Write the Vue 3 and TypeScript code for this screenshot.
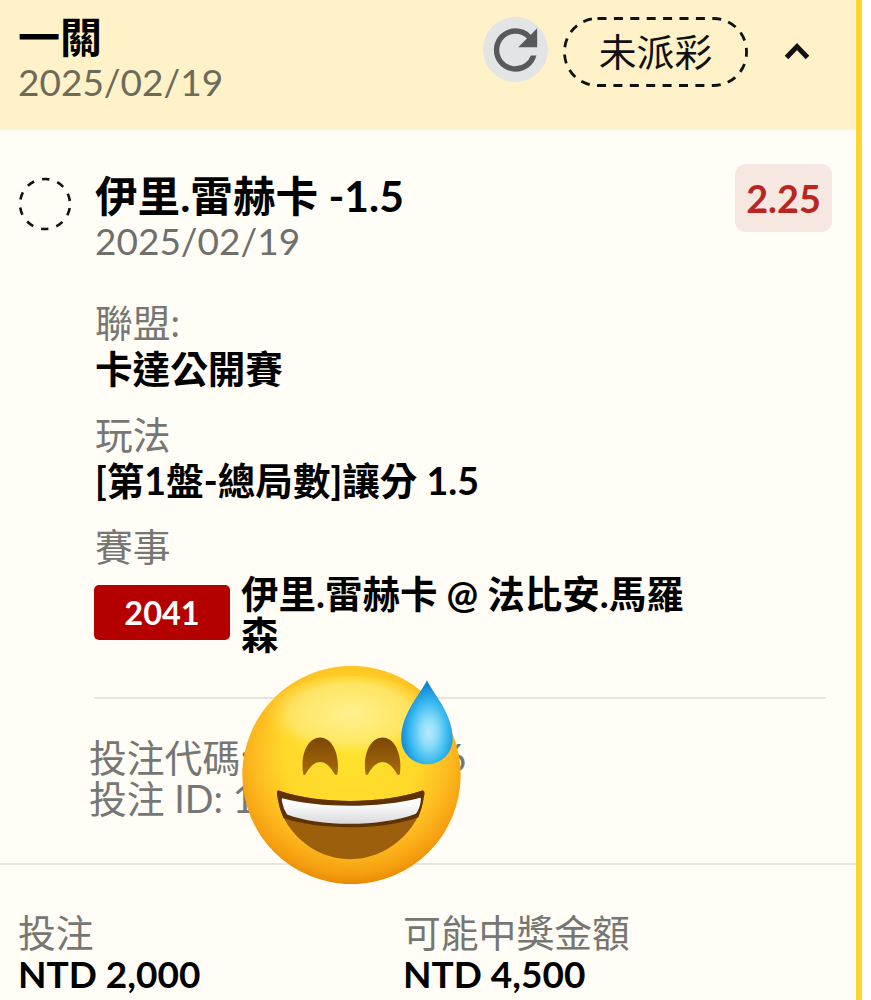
<script setup lang="ts">
const info: { label: string; value: string }[] = [
  { label: '聯盟:', value: '卡達公開賽' },
  { label: '玩法', value: '[第1盤-總局數]讓分 1.5' },
]
const totals: { label: string; value: string }[] = [
  { label: '投注', value: 'NTD 2,000' },
  { label: '可能中獎金額', value: 'NTD 4,500' },
]
</script>

<template>
  <div class="page">
    <div class="card">
      <header class="head">
        <div class="head-text">
          <div class="head-title">一關</div>
          <div class="head-date">2025/02/19</div>
        </div>
        <div class="refresh">
          <svg viewBox="0 0 24 24" width="66" height="66">
            <path fill="#58595b" d="M17.65 6.35A7.958 7.958 0 0 0 12 4c-4.42 0-7.99 3.58-7.99 8s3.57 8 7.99 8c3.73 0 6.84-2.55 7.73-6h-2.08A5.99 5.99 0 0 1 12 18c-3.31 0-6-2.69-6-6s2.69-6 6-6c1.66 0 3.14.69 4.22 1.78L13 11h7V4l-2.35 2.35z" />
          </svg>
        </div>
        <div class="pill">
          <svg class="pill-line" viewBox="0 0 185 70" width="185" height="70">
            <rect x="1.5" y="1.500" width="182" height="67" rx="33" fill="none" stroke="#111" stroke-width="2.800" stroke-dasharray="9 7.400" />
          </svg>
          未派彩
        </div>
        <svg class="chevron" viewBox="0 0 26 18" width="26" height="18">
          <path d="M2.500 15.500 13 4.500l10.500 11" fill="none" stroke="#111" stroke-width="5" />
        </svg>
      </header>

      <section class="body">
        <div class="selection">
          <svg class="status" viewBox="0 0 54 54" width="54" height="54">
            <circle cx="27" cy="27" r="25" fill="none" stroke="#111" stroke-width="2.600" stroke-dasharray="7.500 8.208" stroke-dashoffset="-4.100" />
          </svg>
          <div class="selection-text">
            <div class="selection-name">伊里.雷赫卡 -1.5</div>
            <div class="selection-date">2025/02/19</div>
          </div>
          <div class="odds">2.25</div>
        </div>

        <div class="details">
          <div v-for="item in info" :key="item.label" class="detail">
            <div class="muted">{{ item.label }}</div>
            <div class="strong">{{ item.value }}</div>
          </div>
          <div class="muted">賽事</div>
          <div class="match">
            <div class="badge">2041</div>
            <div class="match-name">伊里.雷赫卡 @ 法比安.馬羅森</div>
          </div>
        </div>

        <div class="rule"></div>

        <div class="codes">
          <div>投注代碼: 12345 6786</div>
          <div>投注 ID: 1234567890</div>
        </div>
      </section>

      <footer class="foot">
        <div v-for="item in totals" :key="item.label" class="total">
          <div class="muted">{{ item.label }}</div>
          <div class="total-value">{{ item.value }}</div>
        </div>
      </footer>
    </div>

    <svg class="emoji" viewBox="66 48 656 652" width="219" height="218" aria-hidden="true">
      <defs>
        <radialGradient id="face" cx="50%" cy="40%" r="62%">
          <stop offset="0" stop-color="#ffe32e" />
          <stop offset="0.5" stop-color="#ffd82a" />
          <stop offset="0.74" stop-color="#fdb81e" />
          <stop offset="0.9" stop-color="#f59c0e" />
          <stop offset="1" stop-color="#e08304" />
        </radialGradient>
        <radialGradient id="shine" cx="50%" cy="44%" r="50%">
          <stop offset="0" stop-color="#fff4a0" stop-opacity="0.85" />
          <stop offset="0.7" stop-color="#fff19a" stop-opacity="0.5" />
          <stop offset="1" stop-color="#ffe838" stop-opacity="0" />
        </radialGradient>
        <radialGradient id="drop" cx="54%" cy="62%" r="56%">
          <stop offset="0" stop-color="#b9ebff" />
          <stop offset="0.3" stop-color="#8adbf9" />
          <stop offset="0.65" stop-color="#38b9f0" />
          <stop offset="1" stop-color="#0f85d4" />
        </radialGradient>
        <linearGradient id="teeth" x1="0" y1="0" x2="0" y2="1">
          <stop offset="0.2" stop-color="#ffffff" />
          <stop offset="1" stop-color="#d9d9dc" />
        </linearGradient>
        <linearGradient id="eye" x1="0" y1="0" x2="0" y2="1">
          <stop offset="0" stop-color="#7b4706" />
          <stop offset="1" stop-color="#a96c0c" />
        </linearGradient>
      </defs>
      <circle cx="394" cy="374" r="327" fill="url(#face)" />
      <ellipse cx="388" cy="205" rx="258" ry="128" fill="url(#shine)" />
      <path fill="url(#eye)" d="M249 370C240 310 265 262 300 262s60 48 52 108q-3 8-9 1C330 347 316 335 300 335s-30 12-43 36q-6 7-8-1Z" />
      <path fill="url(#eye)" d="M436 370C427 310 452 262 487 262s60 48 52 108q-3 8-9 1C517 347 503 335 487 335s-30 12-43 36q-6 7-8-1Z" />
      <path fill="#9c600c" d="M178 421C300 462 480 462 604 421q10-2 8 12C600 540 500 626 390 626S182 540 171 433q-2-14 7-12Z" />
      <path fill="#5f3103" d="M178 421C300 462 480 462 604 421q10-2 8 12l-8 40-10 28C480 540 300 540 190 503l-10-28-9-42q-2-14 7-12Z" />
      <path fill="url(#teeth)" d="M186 444C300 474 480 474 600 442q3 1 1 12-3 22-14 36C480 530 300 530 201 492q-11-16-15-38-2-9 0-10Z" />
      <path fill="url(#drop)" d="M620 90C640 132 697 190 697 265c0 45-35 77-77 77s-77-32-77-77C543 190 600 132 620 90Z" />
    </svg>
  </div>
</template>

<style>
html,
body {
  background: #ffffff;
}
</style>

<style scoped>
.page {
  position: relative;
  width: 871px;
  height: 1000px;
  overflow: hidden;
  background: #ffffff;
  font-family: Lato, "Noto Sans CJK TC", sans-serif;
  font-size: 37.8px;
  color: #000;
}
.card {
  box-sizing: border-box;
  width: 862px;
  height: 1000px;
  border-right: 6px solid #ffd52e;
  background: #fffdf5;
}
.head {
  box-sizing: border-box;
  display: flex;
  align-items: flex-start;
  height: 130px;
  padding: 17px 46px 0 18px;
  background: #fff2c9;
}
.head-text {
  margin: -2px auto 0 0;
}
.head-title {
  font-size: 42px;
  font-weight: 700;
  line-height: 45px;
}
.head-date {
  margin-top: 2px;
  font-size: 37px;
  line-height: 40px;
  color: #6e6a58;
}
.refresh {
  display: flex;
  align-items: center;
  justify-content: center;
  width: 65px;
  height: 65px;
  border-radius: 50%;
  background: #e2e4e6;
}
.pill {
  position: relative;
  box-sizing: border-box;
  display: flex;
  align-items: center;
  justify-content: center;
  width: 185px;
  height: 70px;
  margin-left: 15px;
  padding-bottom: 5px;
  color: #111;
}
.pill-line {
  position: absolute;
  inset: 0;
}
.chevron {
  margin: 25px 0 0 36px;
}
.selection {
  display: flex;
  align-items: flex-start;
  padding: 34px 24px 0 18px;
}
.status {
  margin: 13px 0 0;
}
.selection-text {
  margin: 10px 0 0 23px;
}
.selection-name {
  font-size: 42.6px;
  font-weight: 700;
  line-height: 44px;
}
.selection-date {
  margin-top: 2px;
  font-size: 37px;
  line-height: 42px;
  color: #6f6f6b;
}
.odds {
  display: flex;
  align-items: center;
  justify-content: center;
  width: 97px;
  height: 68px;
  margin-left: auto;
  border-radius: 11px;
  background: #f6e7e1;
  color: #b8261f;
  font-weight: 700;
}
.details {
  margin: 38px 0 0 95px;
  line-height: 46px;
}
.detail {
  margin-bottom: 20px;
}
.muted {
  color: #767672;
}
.strong {
  font-size: 37.6px;
  font-weight: 700;
}
.match {
  display: flex;
  align-items: flex-start;
  margin: 3px 0 0 -1px;
}
.badge {
  display: flex;
  align-items: center;
  justify-content: center;
  width: 136px;
  height: 55px;
  margin-top: 12px;
  border-radius: 5px;
  background: #b50000;
  color: #fff;
  font-size: 32.5px;
  font-weight: 700;
}
.match-name {
  width: 450px;
  margin-left: 11px;
  font-size: 37.5px;
  font-weight: 700;
  line-height: 41px;
}
.rule {
  height: 2px;
  margin: 42px 30px 0 94px;
  background: #e6e4dd;
}
.codes {
  margin: 38px 0 0 89px;
  line-height: 41px;
  color: #767672;
}
.foot {
  display: flex;
  margin-top: 44px;
  padding: 47px 0 0 18px;
  border-top: 2px solid #e6e4dd;
  line-height: 41px;
}
.total {
  width: 385px;
}
.total-value {
  font-size: 37px;
  font-weight: 700;
}
.emoji {
  position: absolute;
  left: 242px;
  top: 666px;
}
</style>
